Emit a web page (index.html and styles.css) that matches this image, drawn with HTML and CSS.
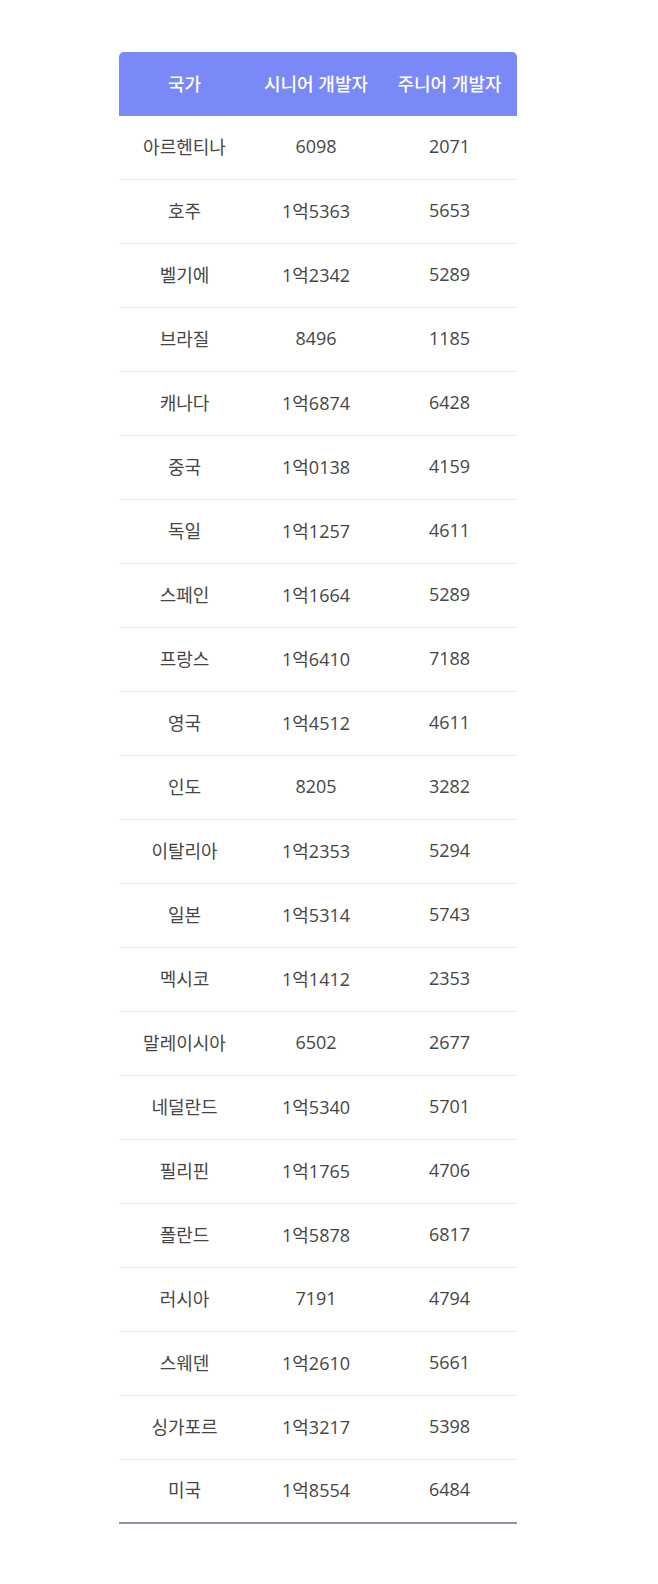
FILE: index.html
```html
<!DOCTYPE html>
<html lang="ko">
<head>
<meta charset="utf-8">
<link rel="stylesheet" href="styles.css">
</head>
<body>
<div class="wrap">
<table class="dev-table">
<colgroup><col class="c1"><col class="c2"><col class="c3"></colgroup>
<thead>
<tr><th>국가</th><th>시니어 개발자</th><th>주니어 개발자</th></tr>
</thead>
<tbody>
<tr><td>아르헨티나</td><td>6098</td><td>2071</td></tr>
<tr><td>호주</td><td>1억5363</td><td>5653</td></tr>
<tr><td>벨기에</td><td>1억2342</td><td>5289</td></tr>
<tr><td>브라질</td><td>8496</td><td>1185</td></tr>
<tr><td>캐나다</td><td>1억6874</td><td>6428</td></tr>
<tr><td>중국</td><td>1억0138</td><td>4159</td></tr>
<tr><td>독일</td><td>1억1257</td><td>4611</td></tr>
<tr><td>스페인</td><td>1억1664</td><td>5289</td></tr>
<tr><td>프랑스</td><td>1억6410</td><td>7188</td></tr>
<tr><td>영국</td><td>1억4512</td><td>4611</td></tr>
<tr><td>인도</td><td>8205</td><td>3282</td></tr>
<tr><td>이탈리아</td><td>1억2353</td><td>5294</td></tr>
<tr><td>일본</td><td>1억5314</td><td>5743</td></tr>
<tr><td>멕시코</td><td>1억1412</td><td>2353</td></tr>
<tr><td>말레이시아</td><td>6502</td><td>2677</td></tr>
<tr><td>네덜란드</td><td>1억5340</td><td>5701</td></tr>
<tr><td>필리핀</td><td>1억1765</td><td>4706</td></tr>
<tr><td>폴란드</td><td>1억5878</td><td>6817</td></tr>
<tr><td>러시아</td><td>7191</td><td>4794</td></tr>
<tr><td>스웨덴</td><td>1억2610</td><td>5661</td></tr>
<tr><td>싱가포르</td><td>1억3217</td><td>5398</td></tr>
<tr><td>미국</td><td>1억8554</td><td>6484</td></tr>
</tbody>
</table>
</div>
</body>
</html>
```
FILE: styles.css
```css
html, body {
  margin: 0;
  padding: 0;
  background: #ffffff;
}
body {
  font-family: "Open Sans", "Noto Sans CJK KR", sans-serif;
  color: #464646;
}
.wrap {
  padding: 52px 0 0 119px;
}
.dev-table {
  width: 398px;
  border-collapse: separate;
  border-spacing: 0;
  table-layout: fixed;
}
.c1 { width: 131px; }
.c2 { width: 132px; }
.c3 { width: 135px; }
.dev-table th {
  background: #7b89f8;
  color: #ffffff;
  font-weight: 500;
  font-size: 18px;
  height: 62px;
  padding: 0 0 2px;
  text-align: center;
  vertical-align: middle;
  white-space: nowrap;
}
.dev-table th:first-child { border-top-left-radius: 5px; }
.dev-table th:last-child { border-top-right-radius: 5px; }
.dev-table td {
  font-size: 18px;
  font-weight: 400;
  height: 59px;
  padding: 0 0 4px;
  text-align: center;
  vertical-align: middle;
  border-bottom: 1px solid #ececec;
  white-space: nowrap;
}
.dev-table tbody tr:last-child td {
  height: 58px;
  border-bottom: 2px solid #8b95a5;
}
```
